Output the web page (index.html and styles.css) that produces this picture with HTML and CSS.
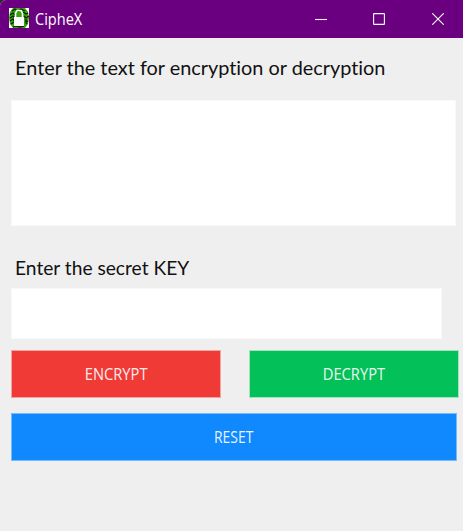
FILE: index.html
```html
<!DOCTYPE html>
<html lang="en">
<head>
<meta charset="utf-8">
<title>CipheX</title>
<link rel="stylesheet" href="styles.css">
</head>
<body>
<div class="window">
  <header class="titlebar">
    <svg class="logo" viewBox="0 0 20 20" aria-hidden="true">
      <path fill="#fff" d="M0 0h20v20H0z"/>
      <path fill="#36a30c" d="M4 0h12l3 4 1 6-1 6-3 4H4l-3-4-1-6 1-6z"/>
      <path fill="none" stroke="#062400" stroke-width="1.300" d="M3 3l3-2 3 2 3-2 4 2M1 7l3-2 2 2M14 4l3 2 2-1M1 10l3-2 2 2M15 8l2 2 3-2M1 13l3-2 1 2M17 11v3l2-1M2 16l3-2M17 15l1 1M4 19l3-1 4 1 4-1"/>
      <path fill="none" stroke="#fff" stroke-width="1.600" d="M6.500 10V5.500L8 2.500h4l1.500 3V10"/>
      <path fill="#fff" d="M5 9h10v9H5z"/>
    </svg>
    <span class="title"><span class="fit fit-title">CipheX</span></span>
    <div class="controls">
      <svg viewBox="0 0 12 12"><path d="M0 6.500h12"/></svg>
      <svg viewBox="0 0 12 12"><rect x=".6" y=".6" width="10.800" height="10.800" rx=".5"/></svg>
      <svg class="close" viewBox="0 0 12 12"><path d="M.3.3l11.400 11.400M11.700.3L.3 11.700"/></svg>
    </div>
  </header>
  <main class="content">
    <label class="label" for="message"><span class="fit fit-message">Enter the text for encryption or decryption</span></label>
    <textarea class="field message" id="message"></textarea>
    <label class="label key-label" for="key"><span class="fit fit-key">Enter the secret KEY</span></label>
    <input class="field key" id="key" type="password">
    <div class="actions">
      <button class="button encrypt"><span class="fit">ENCRYPT</span></button>
      <button class="button decrypt"><span class="fit">DECRYPT</span></button>
    </div>
    <button class="button reset"><span class="fit">RESET</span></button>
  </main>
</div>
</body>
</html>
```

FILE: styles.css
```css
* {
  box-sizing: border-box;
}

body {
  margin: 0;
  background: #2b2b2b;
  font-family: "Open Sans", "Noto Sans", sans-serif;
}

.window {
  height: 531px;
  overflow: hidden;
  background: #efefef;
  border-top-left-radius: 6px;
}

.titlebar {
  display: flex;
  align-items: center;
  height: 38px;
  padding: 0 19px 0 9px;
  background: #6a0080;
  color: #fff;
}

.logo {
  width: 20px;
  height: 20px;
  margin-top: -2px;
}

.title {
  margin-left: 6px;
  font-size: 16px;
  line-height: 37px;
}

.fit {
  display: inline-block;
  white-space: nowrap;
}

.fit-title {
  transform: scaleX(.91);
  transform-origin: left;
}

.controls {
  display: flex;
  gap: 46px;
  margin-left: auto;
}

.controls svg {
  width: 12px;
  height: 12px;
  fill: none;
  stroke: #fff;
  stroke-width: 1.1;
}

.controls .close {
  margin-left: 1px;
}

.content {
  display: flex;
  flex-direction: column;
  align-items: flex-start;
  padding: 14px 5px 0 11px;
}

.label {
  height: 30px;
  padding-left: 4px;
  font-family: Lato, sans-serif;
  font-size: 20px;
  font-variant-ligatures: none;
  line-height: 30px;
  color: #111;
}

.fit-message,
.fit-key {
  transform-origin: left;
}

.fit-message {
  transform: scaleX(.993);
}

.fit-key {
  transform: scaleX(.959);
}

.field {
  display: block;
  margin: 0;
  padding: 8px;
  border: 1px solid #f9f9f9;
  border-radius: 0;
  outline: 0;
  background: #fff;
  resize: none;
  font: 18px Lato, sans-serif;
}

.message {
  width: 445px;
  height: 126px;
  margin-top: 18px;
}

.key-label {
  margin-top: 26px;
}

.key {
  width: 431px;
  height: 51px;
  margin-top: 6px;
}

.actions {
  display: flex;
  gap: 28px;
  margin-top: 11px;
}

.button {
  width: 210px;
  height: 48px;
  padding: 0;
  border: 1px solid;
  border-radius: 0;
  font: 16px "Open Sans", sans-serif;
  color: #fff;
}

.button .fit {
  transform: scaleX(.92);
  opacity: .9;
}

.encrypt {
  background: #ef3a36;
  border-color: #efa5a3;
}

.decrypt {
  background: #04c058;
  border-color: #a5e3c0;
}

.reset {
  width: 446px;
  margin-top: 15px;
  background: #1089ff;
  border-color: #78b9f8;
}

.reset .fit {
  transform: scaleX(.87);
}
```
